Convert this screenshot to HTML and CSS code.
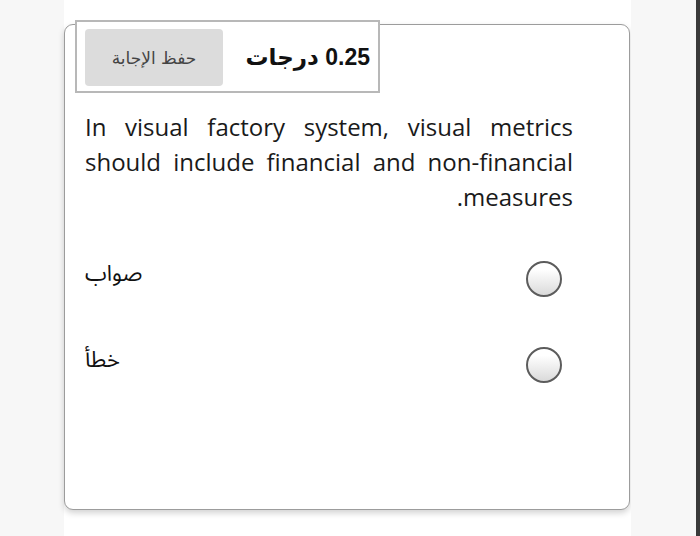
FILE: index.html
```html
<!DOCTYPE html>
<html lang="ar">
<head>
<meta charset="utf-8">
<title>Question</title>
<link rel="stylesheet" href="styles.css">
</head>
<body>
<div class="screen">
  <div class="gutter"></div>
  <main class="column">
    <section class="card">
      <div class="info" dir="rtl">
        <div class="grade">0.25 درجات</div>
        <button class="save" type="button">حفظ الإجابة</button>
      </div>
      <p class="question" dir="rtl">In visual factory system, visual metrics should include financial and non-financial measures.</p>
      <div class="options">
        <label class="option">
          <span class="opt-text" dir="rtl">صواب</span>
          <span class="radio"></span>
        </label>
        <label class="option">
          <span class="opt-text" dir="rtl">خطأ</span>
          <span class="radio"></span>
        </label>
      </div>
    </section>
  </main>
  <div class="gutter wide"></div>
  <div class="edge"></div>
</div>
</body>
</html>
```
FILE: styles.css
```css
html, body {
  margin: 0;
  padding: 0;
}
body {
  background: #f7f7f7;
  font-family: "Open Sans", "DejaVu Sans", sans-serif;
  color: #1a1a1a;
}
.screen {
  display: flex;
  width: 700px;
  height: 536px;
  overflow: hidden;
}
.gutter {
  width: 64px;
  flex: none;
  background: #f7f7f7;
}
.gutter.wide {
  flex: 1;
  width: auto;
}
.edge {
  width: 4px;
  flex: none;
  background: #3a3a3a;
}
.column {
  width: 567px;
  flex: none;
  background: #ffffff;
  padding-top: 24px;
  box-sizing: border-box;
}
.card {
  width: 566px;
  height: 486px;
  box-sizing: border-box;
  border: 1.5px solid #9c9c9c;
  border-radius: 9px;
  background: #fff;
  box-shadow: 0 3px 6px rgba(0, 0, 0, 0.18);
  padding: 0 20px 0 20px;
}
.info {
  width: 305px;
  height: 73px;
  box-sizing: border-box;
  margin: -5px 0 0 -10px;
  border: 2px solid #b8b8b8;
  background: #fff;
  display: flex;
  align-items: center;
  gap: 20px;
  padding: 2px 8px 0 8px;
}
.grade {
  font-family: "Liberation Sans", "DejaVu Sans", sans-serif;
  font-weight: bold;
  font-size: 23px;
  color: #111;
  white-space: nowrap;
}
.save {
  width: 138px;
  height: 57px;
  border: none;
  border-radius: 4px;
  background: #dcdcdc;
  color: #444;
  font-family: "DejaVu Sans", sans-serif;
  font-size: 17px;
  padding: 0;
  margin-right: auto;
}
.question {
  width: 488px;
  margin: 16px 0 0 0;
  font-size: 24px;
  line-height: 35px;
  text-align: justify;
  color: #1a1a1a;
}
.options {
  display: flex;
  flex-direction: column;
  gap: 48px;
  margin-top: 46px;
  width: 477px;
}
.option {
  display: flex;
  justify-content: space-between;
  align-items: center;
  height: 38px;
}
.opt-text {
  font-family: "Noto Sans Arabic", "DejaVu Sans", sans-serif;
  font-size: 22px;
  color: #111;
  margin-top: -10px;
}
.radio {
  width: 36px;
  height: 36px;
  box-sizing: border-box;
  border-radius: 50%;
  border: 2px solid #5c5c5c;
  background: linear-gradient(#ffffff 20%, #dadada);
}
```
